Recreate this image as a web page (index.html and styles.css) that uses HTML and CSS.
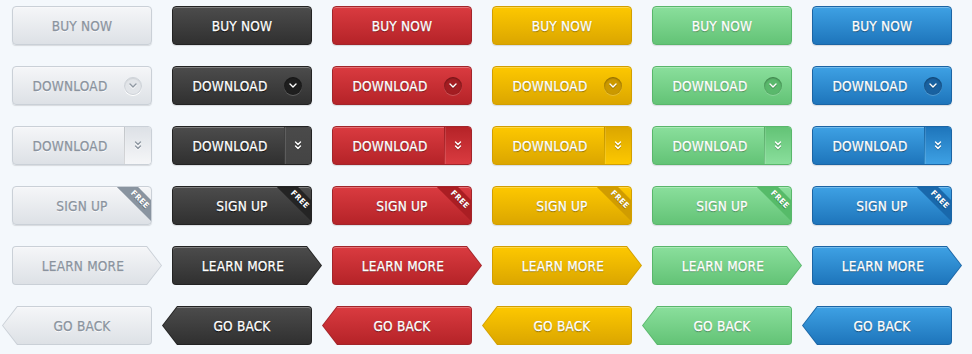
FILE: index.html
```html
<!DOCTYPE html>
<html lang="en">
<head>
    <meta charset="UTF-8">
    <title>Buttons</title>
    <link rel="stylesheet" href="styles.css">
</head>
<body>
    <div class="grid">
        <!-- buy now -->
        <a class="btn grey">BUY NOW</a>
        <a class="btn dark">BUY NOW</a>
        <a class="btn red">BUY NOW</a>
        <a class="btn yellow">BUY NOW</a>
        <a class="btn green">BUY NOW</a>
        <a class="btn blue">BUY NOW</a>

        <!-- download with round icon -->
        <a class="btn drop grey"><span class="label">DOWNLOAD</span><span class="well"><svg width="8" height="5" viewBox="0 0 8 5"><polyline points="1,1 4,4 7,1"/></svg></span></a>
        <a class="btn drop dark"><span class="label">DOWNLOAD</span><span class="well"><svg width="8" height="5" viewBox="0 0 8 5"><polyline points="1,1 4,4 7,1"/></svg></span></a>
        <a class="btn drop red"><span class="label">DOWNLOAD</span><span class="well"><svg width="8" height="5" viewBox="0 0 8 5"><polyline points="1,1 4,4 7,1"/></svg></span></a>
        <a class="btn drop yellow"><span class="label">DOWNLOAD</span><span class="well"><svg width="8" height="5" viewBox="0 0 8 5"><polyline points="1,1 4,4 7,1"/></svg></span></a>
        <a class="btn drop green"><span class="label">DOWNLOAD</span><span class="well"><svg width="8" height="5" viewBox="0 0 8 5"><polyline points="1,1 4,4 7,1"/></svg></span></a>
        <a class="btn drop blue"><span class="label">DOWNLOAD</span><span class="well"><svg width="8" height="5" viewBox="0 0 8 5"><polyline points="1,1 4,4 7,1"/></svg></span></a>

        <!-- download split -->
        <a class="btn split grey"><span class="label">DOWNLOAD</span><span class="seg"><svg width="8" height="9" viewBox="0 0 8 9"><polyline points="1.5,1 4,3.5 6.5,1"/><polyline points="1.5,5 4,7.5 6.5,5"/></svg></span></a>
        <a class="btn split dark"><span class="label">DOWNLOAD</span><span class="seg"><svg width="8" height="9" viewBox="0 0 8 9"><polyline points="1.5,1 4,3.5 6.5,1"/><polyline points="1.5,5 4,7.5 6.5,5"/></svg></span></a>
        <a class="btn split red"><span class="label">DOWNLOAD</span><span class="seg"><svg width="8" height="9" viewBox="0 0 8 9"><polyline points="1.5,1 4,3.5 6.5,1"/><polyline points="1.5,5 4,7.5 6.5,5"/></svg></span></a>
        <a class="btn split yellow"><span class="label">DOWNLOAD</span><span class="seg"><svg width="8" height="9" viewBox="0 0 8 9"><polyline points="1.5,1 4,3.5 6.5,1"/><polyline points="1.5,5 4,7.5 6.5,5"/></svg></span></a>
        <a class="btn split green"><span class="label">DOWNLOAD</span><span class="seg"><svg width="8" height="9" viewBox="0 0 8 9"><polyline points="1.5,1 4,3.5 6.5,1"/><polyline points="1.5,5 4,7.5 6.5,5"/></svg></span></a>
        <a class="btn split blue"><span class="label">DOWNLOAD</span><span class="seg"><svg width="8" height="9" viewBox="0 0 8 9"><polyline points="1.5,1 4,3.5 6.5,1"/><polyline points="1.5,5 4,7.5 6.5,5"/></svg></span></a>

        <!-- sign up with ribbon -->
        <a class="btn grey">SIGN UP<span class="free">FREE</span></a>
        <a class="btn dark">SIGN UP<span class="free">FREE</span></a>
        <a class="btn red">SIGN UP<span class="free">FREE</span></a>
        <a class="btn yellow">SIGN UP<span class="free">FREE</span></a>
        <a class="btn green">SIGN UP<span class="free">FREE</span></a>
        <a class="btn blue">SIGN UP<span class="free">FREE</span></a>

        <!-- arrows -->
        <a class="btn next grey"><span class="label">LEARN MORE</span></a>
        <a class="btn next dark"><span class="label">LEARN MORE</span></a>
        <a class="btn next red"><span class="label">LEARN MORE</span></a>
        <a class="btn next yellow"><span class="label">LEARN MORE</span></a>
        <a class="btn next green"><span class="label">LEARN MORE</span></a>
        <a class="btn next blue"><span class="label">LEARN MORE</span></a>

        <a class="btn back grey"><span class="label">GO BACK</span></a>
        <a class="btn back dark"><span class="label">GO BACK</span></a>
        <a class="btn back red"><span class="label">GO BACK</span></a>
        <a class="btn back yellow"><span class="label">GO BACK</span></a>
        <a class="btn back green"><span class="label">GO BACK</span></a>
        <a class="btn back blue"><span class="label">GO BACK</span></a>
    </div>
</body>
</html>
```

FILE: styles.css
```css
* { margin: 0; padding: 0; box-sizing: border-box; }

body {
    background: #f4f8fc;
    font-family: "DejaVu Sans Condensed", "DejaVu Sans", sans-serif;
    font-stretch: condensed;
}

.grid {
    display: grid;
    grid-template-columns: repeat(6, 140px);
    grid-auto-rows: 39px;
    gap: 21px 20px;
    padding: 6px 0 0 12px;
}

/* colours */
.grey   { --top: #f5f6f8; --bottom: #dde1e6; --edge: #cad0d7; --ink: #8a939e; --glow: 0 1px 0 #fff; --deep: #8994a0; --well: #e2e5e9; --mark: #8f98a3; }
.dark   { --top: #4c4c4c; --bottom: #303030; --edge: #232323; --ink: #fff; --glow: 0 1px 1px rgba(0,0,0,.9); --deep: #242424; --well: #1f1f1f; --mark: #fff; }
.red    { --top: #da3b40; --bottom: #b52328; --edge: #a2252a; --ink: #fff; --glow: 0 1px 1px rgba(0,0,0,.45); --deep: #aa1e23; --well: #a31d22; --mark: #fff; }
.yellow { --top: #fdc800; --bottom: #dba600; --edge: #d29f00; --ink: #fff; --glow: 0 1px 1px rgba(0,0,0,.4); --deep: #d09c00; --well: #cb9900; --mark: #fff; }
.green  { --top: #8adf9c; --bottom: #63c376; --edge: #59b76b; --ink: #fff; --glow: 0 1px 1px rgba(0,0,0,.35); --deep: #56bb69; --well: #5ab86c; --mark: #fff; }
.blue   { --top: #3ea1e4; --bottom: #1e75bb; --edge: #1b65a5; --ink: #fff; --glow: 0 1px 1px rgba(0,0,0,.45); --deep: #1968ab; --well: #1961a0; --mark: #fff; }

.btn {
    position: relative;
    display: flex;
    align-items: center;
    justify-content: center;
    height: 39px;
    border: 1px solid var(--edge);
    border-radius: 4px;
    background: linear-gradient(var(--top), var(--bottom));
    box-shadow: inset 0 1px 0 rgba(255,255,255,.28), 0 1px 1px rgba(0,0,0,.12);
    color: var(--ink);
    text-shadow: var(--glow);
    font-size: 13.5px;
    letter-spacing: .2px;
    -webkit-text-stroke: 0.25px currentColor;
    text-decoration: none;
    overflow: hidden;
}

.btn svg {
    fill: none;
    stroke: var(--mark);
    stroke-width: 1.4;
    stroke-linecap: round;
    stroke-linejoin: round;
    filter: drop-shadow(0 1px 0 rgba(0,0,0,.25));
}

.grey svg { filter: drop-shadow(0 1px 0 #fff); }

/* download with round icon */
.drop, .split { justify-content: flex-start; }

.drop .label, .split .label {
    flex: 1;
    text-align: center;
    padding-left: 3px;
}

.well {
    display: flex;
    align-items: center;
    justify-content: center;
    width: 18px;
    height: 18px;
    margin-right: 9px;
    border-radius: 50%;
    background: var(--well);
    box-shadow: inset 0 1px 2px rgba(0,0,0,.35), 0 1px 0 rgba(255,255,255,.2);
}

.grey .well {
    border: 1px solid #cdd2d8;
    box-shadow: inset 0 1px 1px rgba(0,0,0,.08), 0 1px 0 #fff;
}

/* download split */
.seg {
    align-self: stretch;
    width: 27px;
    display: flex;
    align-items: center;
    justify-content: center;
    border-left: 1px solid rgba(0,0,0,.12);
    background: linear-gradient(var(--bottom), var(--top));
    box-shadow: inset 1px 0 0 rgba(255,255,255,.12);
}

.dark .seg { background: linear-gradient(#4a4a4a, #444); }

/* free ribbon */
.free {
    position: absolute;
    top: 5px;
    right: -20px;
    width: 62px;
    height: 15px;
    transform: rotate(45deg);
    background: var(--deep);
    color: #fff;
    text-shadow: 0 1px 0 rgba(0,0,0,.3);
    -webkit-text-stroke: 0;
    font-family: "DejaVu Sans", sans-serif;
    font-size: 8px;
    font-weight: bold;
    line-height: 15px;
    text-align: center;
    letter-spacing: .5px;
}

/* arrow shapes */
.next, .back {
    width: 150px;
    border: none;
    box-shadow: none;
    background: var(--edge);
}

.next {
    margin-right: -10px;
    padding-right: 8px;
    border-radius: 4px 0 0 4px;
    clip-path: polygon(0 0, calc(100% - 15px) 0, 100% 50%, calc(100% - 15px) 100%, 0 100%);
}

.back {
    margin-left: -10px;
    padding-left: 10px;
    border-radius: 0 4px 4px 0;
    clip-path: polygon(15px 0, 100% 0, 100% 100%, 15px 100%, 0 50%);
}

.next::before, .back::before {
    content: "";
    position: absolute;
    inset: 1px;
    background: linear-gradient(var(--top), var(--bottom));
    box-shadow: inset 0 1px 0 rgba(255,255,255,.28);
}

.next::before {
    border-radius: 3px 0 0 3px;
    clip-path: polygon(0 0, calc(100% - 14.5px) 0, 100% 50%, calc(100% - 14.5px) 100%, 0 100%);
}

.back::before {
    border-radius: 0 3px 3px 0;
    clip-path: polygon(14.5px 0, 100% 0, 100% 100%, 14.5px 100%, 0 50%);
}

.next .label, .back .label {
    position: relative;
}
```
